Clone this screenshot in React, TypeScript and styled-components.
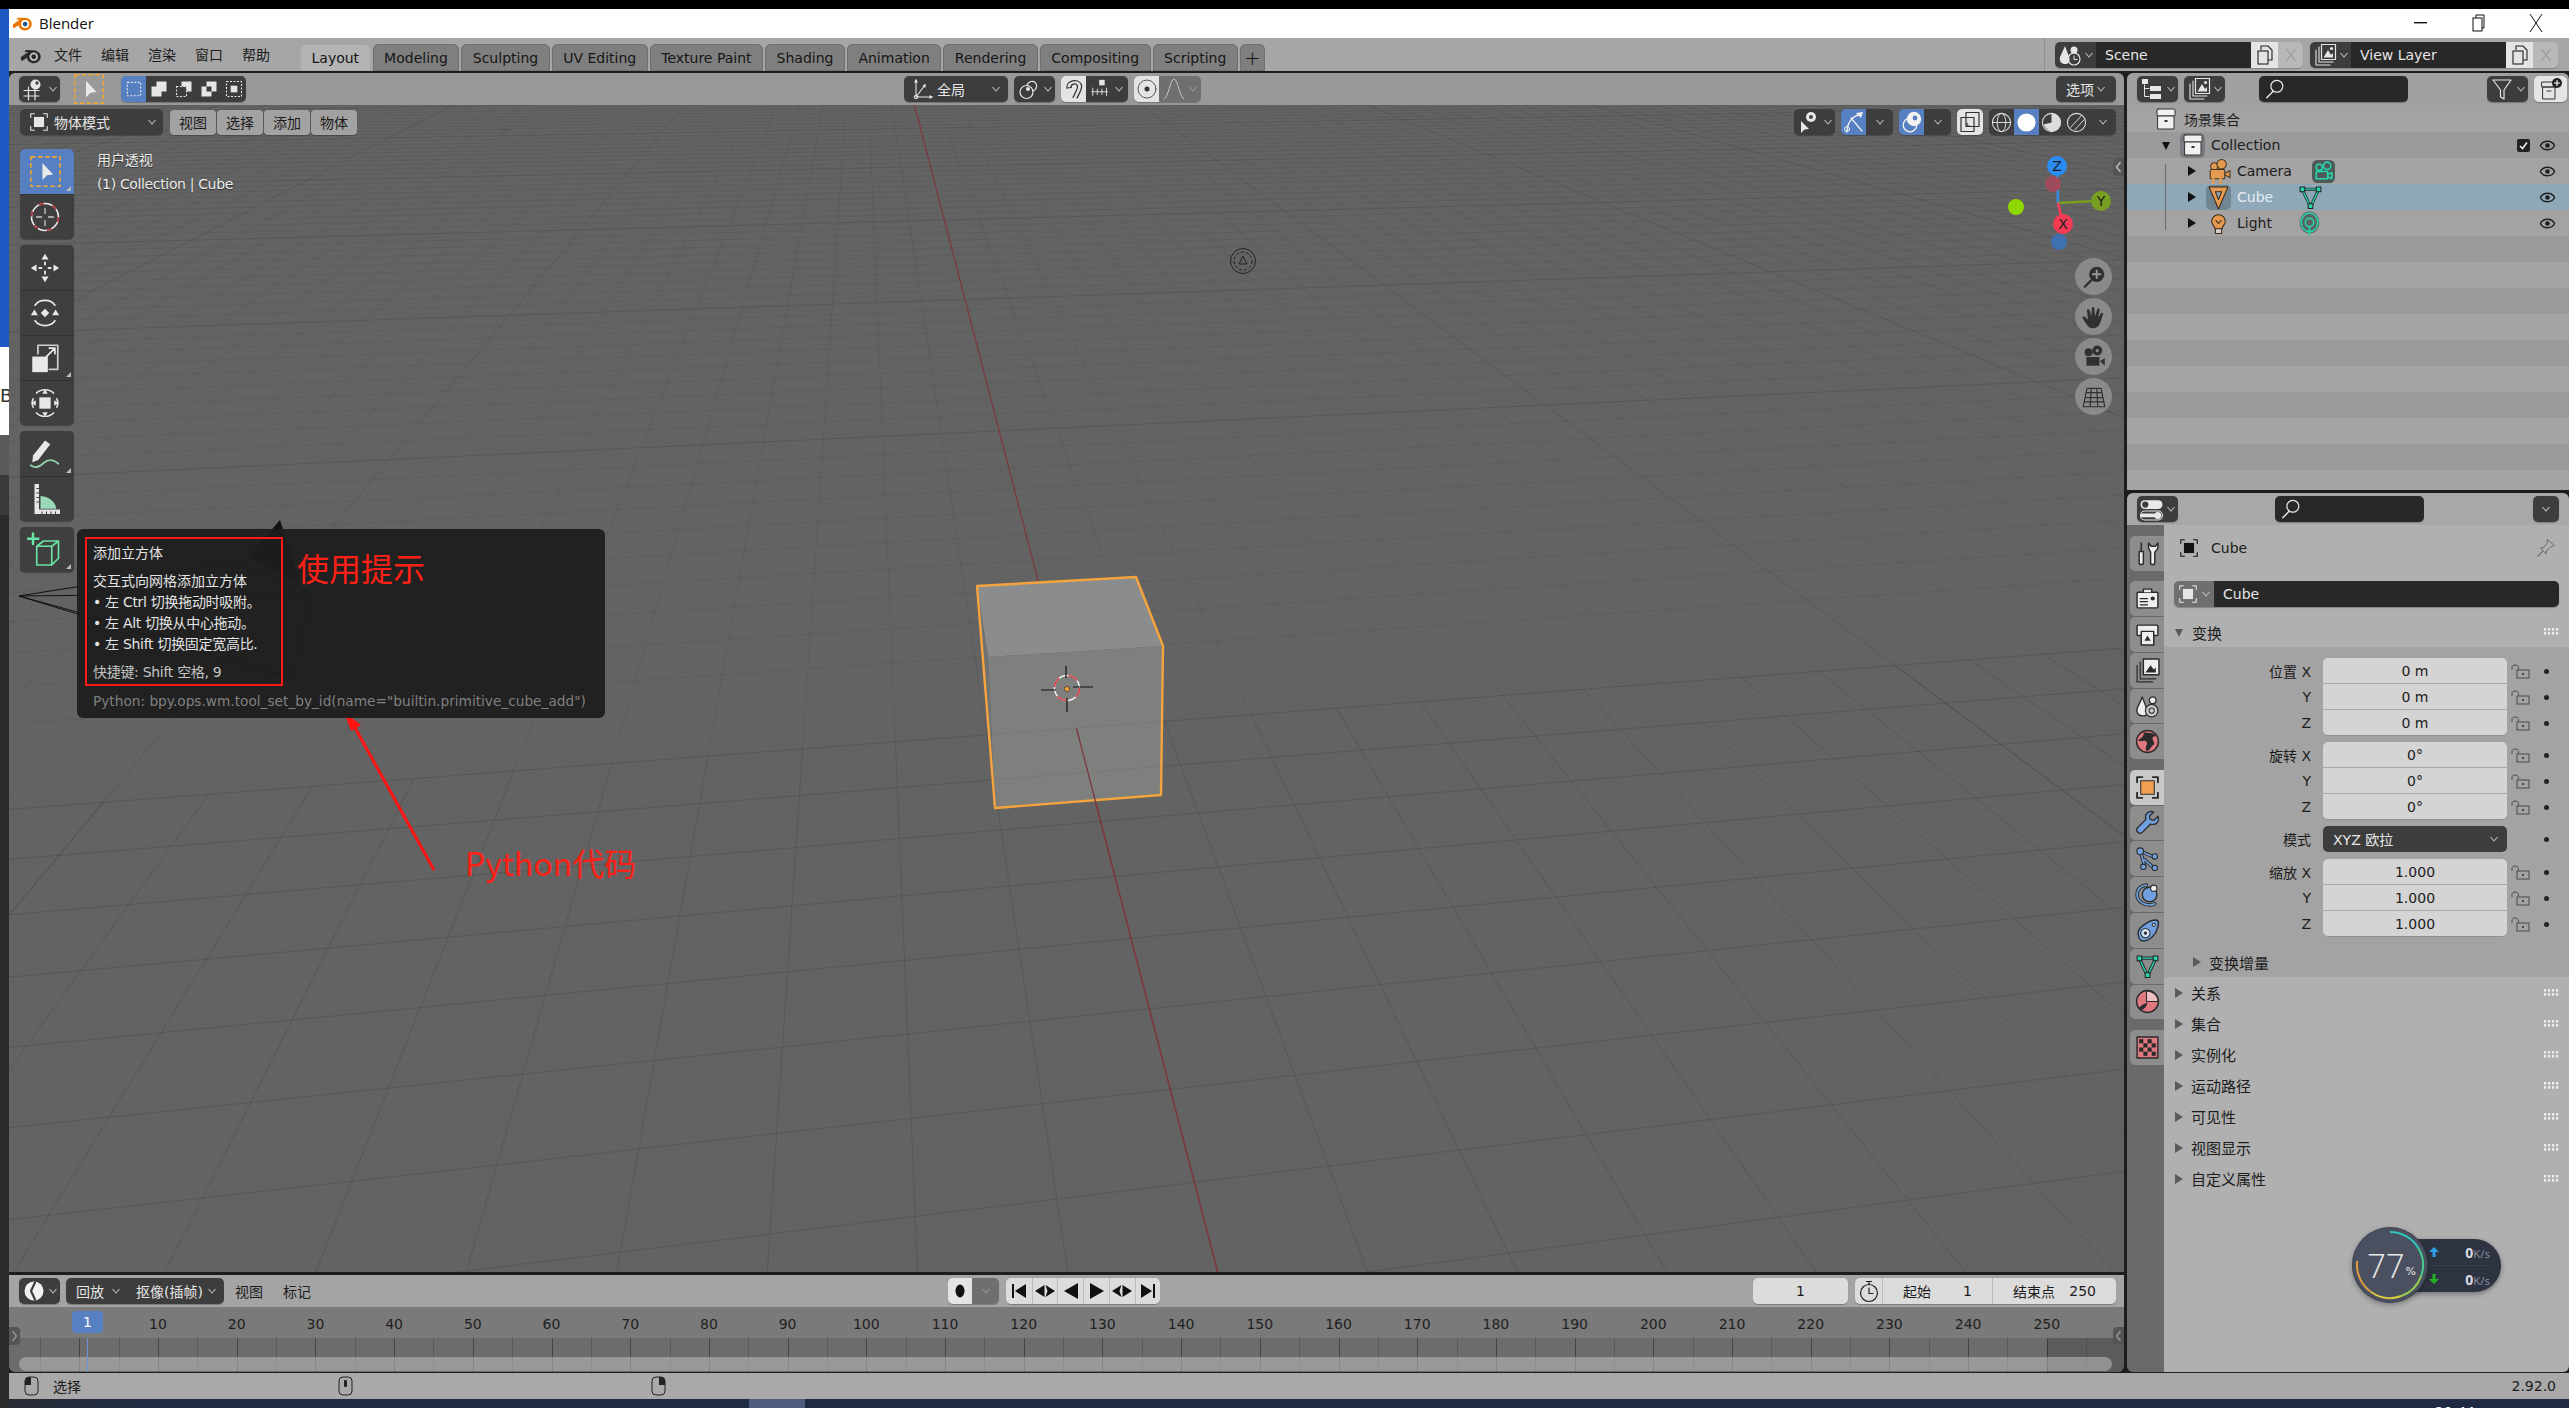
import React from "react";
import styled, { createGlobalStyle } from "styled-components";

const FONT = `"DejaVu Sans", "Noto Sans CJK SC", sans-serif`;
const BLUE = "#5680c2";
const DARK = "#3d3d3d";
const FIELD = "#282828";

const GlobalStyle = createGlobalStyle`
  html, body {
    margin: 0;
    padding: 0;
    width: 2569px;
    height: 1408px;
    overflow: hidden;
    background: #000;
  }
  body {
    font-family: ${FONT};
    font-size: 14px;
    color: #1a1a1a;
  }
  * {
    box-sizing: border-box;
  }
`;

const Page = styled.div`
  width: 2569px;
  height: 1408px;
  display: flex;
  flex-direction: column;
`;

const TopEdge = styled.div`
  height: 9px;
  background: #000;
`;

const Desk = styled.div`
  flex: 1;
  display: flex;
  min-height: 0;
`;

const LeftStrip = styled.div`
  width: 9px;
  display: flex;
  flex-direction: column;
  overflow: hidden;
  background: #2b2b2b;
`;

const StripPiece = styled.div<{ $h: number; $bg: string }>`
  height: ${(p) => p.$h}px;
  background: ${(p) => p.$bg};
  font-size: 18px;
  color: #333;
  line-height: 1;
  white-space: nowrap;
  padding-top: 40px;
`;

const Window = styled.div`
  flex: 1;
  min-width: 0;
  display: flex;
  flex-direction: column;
`;

const TitleBar = styled.div`
  height: 29px;
  background: #fff;
  display: flex;
  align-items: center;
  padding: 0 0 2px 3px;
  gap: 6px;
  font-family: "Open Sans", sans-serif;
  font-size: 15px;
  color: #111;
`;

const WinButtons = styled.div`
  margin-left: auto;
  display: flex;
  padding-right: 4px;
`;

const WinButton = styled.div`
  width: 58px;
  height: 20px;
  display: flex;
  align-items: center;
  justify-content: center;
`;

const TopBar = styled.div`
  height: 33px;
  background: #a6a6a6;
  display: flex;
  align-items: flex-end;
`;

const TopLogo = styled.div`
  width: 45px;
  height: 33px;
  padding-left: 11px;
  display: flex;
  align-items: center;
`;

const MenuRow = styled.div`
  height: 33px;
  display: flex;
  align-items: center;
  gap: 19px;
  padding-bottom: 1px;
  color: #1c1c1c;
`;

const Tabs = styled.div`
  display: flex;
  gap: 2px;
  margin-left: 30px;
`;

const Tab = styled.div<{ $active?: boolean }>`
  height: 27px;
  padding: 0 11.5px;
  display: flex;
  align-items: center;
  justify-content: center;
  border-radius: 6px 6px 0 0;
  background: ${(p) => (p.$active ? "#b4b4b4" : "#7f7f7f")};
  box-shadow: inset 0 0 0 1px ${(p) => (p.$active ? "#a8a8a8" : "#707070")};
  color: #161616;
`;

const PlusTab = styled(Tab)`
  width: 25px;
  padding: 0;
  font-size: 20px;
  font-weight: 300;
`;

const SceneArea = styled.div`
  margin-left: auto;
  height: 33px;
  display: flex;
  align-items: center;
  gap: 7px;
  padding-right: 11px;
  border-left: 1px solid #8f8f8f;
  padding-left: 10px;
`;

const SceneGroup = styled.div`
  height: 26px;
  display: flex;
  border-radius: 5px;
  overflow: hidden;
  box-shadow: 0 1px 1px rgba(0, 0, 0, 0.2);
`;

const Seg = styled.div<{ $w: number; $tone?: "dark" | "blue" | "white" | "mid" | "field" | "pale" }>`
  width: ${(p) => p.$w}px;
  height: 100%;
  flex: none;
  display: flex;
  align-items: center;
  justify-content: center;
  gap: 2px;
  color: #e6e6e6;
  background: ${(p) =>
    ({ dark: DARK, blue: BLUE, white: "#e4e4e4", mid: "#6f6f6f", field: FIELD, pale: "#b8b8b8" })[p.$tone || "dark"]};
`;

const NameSeg = styled(Seg)`
  justify-content: flex-start;
  padding-left: 9px;
`;

const Workspace = styled.div`
  flex: 1;
  min-height: 0;
  background: #1d1d1d;
  display: flex;
  gap: 3px;
  padding: 2px 0 1px;
`;

const LeftColumn = styled.div`
  width: 2115px;
  display: flex;
  flex-direction: column;
  gap: 3px;
`;

const RightColumn = styled.div`
  flex: 1;
  min-width: 0;
  display: flex;
  flex-direction: column;
  gap: 3px;
`;

const ViewportArea = styled.div`
  flex: 1;
  min-height: 0;
  display: flex;
  flex-direction: column;
  border-radius: 6px 6px 0 0;
  overflow: hidden;
`;

const HeaderBar = styled.div`
  height: 32px;
  flex: none;
  background: #999;
  display: flex;
  align-items: center;
  padding: 0 8px 0 10px;
`;

const WidgetRow = styled.div<{ $ml?: number; $gap?: number }>`
  display: flex;
  align-items: center;
  gap: ${(p) => p.$gap ?? 6}px;
  margin-left: ${(p) => (p.$ml === undefined ? "0" : `${p.$ml}px`)};
`;

const RightRow = styled(WidgetRow)`
  margin-left: auto;
`;

const Group = styled.div`
  height: 26px;
  display: flex;
  border-radius: 5px;
  overflow: hidden;
  flex: none;
  box-shadow: 0 1px 1px rgba(0, 0, 0, 0.25);
`;

const ToolIcon = styled.div`
  width: 28px;
  height: 28px;
  margin-left: 15px;
  margin-right: 18px;
  display: flex;
  align-items: center;
  justify-content: center;
`;

const Canvas = styled.div`
  flex: 1;
  position: relative;
  background: #636363;
  overflow: hidden;
`;

const SceneSvg = styled.svg`
  position: absolute;
  left: 0;
  top: 0;
`;

const ViewHeader = styled.div`
  position: absolute;
  left: 11px;
  right: 8px;
  top: 4px;
  height: 26px;
  display: flex;
  align-items: center;
`;

const ModeLabel = styled.span`
  flex: 1;
`;

const ModeSeg = styled(Seg)`
  justify-content: flex-start;
  padding: 0 6px 0 8px;
  gap: 4px;
`;

const MenuButtons = styled.div`
  display: flex;
  gap: 1px;
  margin-left: 7px;
`;

const MenuButton = styled.div`
  width: 46px;
  height: 25px;
  background: #a2a2a2;
  border-radius: 4px;
  color: #1c1c1c;
  display: flex;
  align-items: center;
  justify-content: center;
  box-shadow: 0 1px 1px rgba(0, 0, 0, 0.25);
`;

const ViewInfo = styled.div`
  position: absolute;
  left: 88px;
  top: 43px;
  color: #ececec;
  line-height: 24px;
  letter-spacing: -0.1px;
  text-shadow: 0 1px 1px rgba(0, 0, 0, 0.55);
`;

const ViewInfoLatin = styled.div`
  letter-spacing: -0.35px;
`;

const Toolbar = styled.div`
  position: absolute;
  left: 11px;
  top: 44px;
  width: 54px;
  display: flex;
  flex-direction: column;
  gap: 6px;
`;

const ToolGroup = styled.div`
  border-radius: 5px;
  overflow: hidden;
  display: flex;
  flex-direction: column;
  box-shadow: 0 1px 1px rgba(0, 0, 0, 0.3), inset 0 0 0 1px #333;
`;

const ToolButton = styled.div<{ $active?: boolean; $corner?: boolean }>`
  height: 45px;
  position: relative;
  display: flex;
  align-items: center;
  justify-content: center;
  padding-right: 4px;
  background: ${(p) => (p.$active ? BLUE : "#3f3f3f")};
  & + & {
    border-top: 1px solid #333;
  }
  &::after {
    content: "";
    display: ${(p) => (p.$corner ? "block" : "none")};
    position: absolute;
    right: 3px;
    bottom: 3px;
    border-style: solid;
    border-width: 0 0 5px 5px;
    border-color: transparent transparent #bbb transparent;
  }
`;

const Tooltip = styled.div`
  position: absolute;
  left: 68px;
  top: 424px;
  width: 528px;
  height: 189px;
  border-radius: 6px;
  background: rgba(30, 30, 30, 0.95);
  padding: 14px 0 0 16px;
  color: #e4e4e4;
  line-height: 21px;
`;

const TipLine = styled.div<{ $mt?: number; $tone?: string; $tight?: boolean }>`
  margin-top: ${(p) => p.$mt ?? 0}px;
  color: ${(p) => p.$tone || "#e4e4e4"};
  letter-spacing: ${(p) => (p.$tight ? "-0.3px" : "0")};
  white-space: nowrap;
`;

const PythonLine = styled(TipLine)`
  font-size: 13.7px;
`;

const RedBox = styled.div`
  position: absolute;
  left: 8px;
  top: 8px;
  width: 198px;
  height: 149px;
  border: 2px solid #ff1a1a;
`;

const RedNote = styled.div<{ $x: number; $y: number }>`
  position: absolute;
  left: ${(p) => p.$x}px;
  top: ${(p) => p.$y}px;
  font-family: "Noto Sans CJK SC", sans-serif;
  font-size: 32px;
  line-height: 40px;
  color: #ff2015;
  white-space: nowrap;
`;

const SideChevron = styled.div<{ $side: "left" | "right"; $y: number }>`
  position: absolute;
  ${(p) => p.$side}: 0;
  top: ${(p) => p.$y}px;
  width: 11px;
  height: 18px;
  background: #555;
  border-radius: ${(p) => (p.$side === "right" ? "4px 0 0 4px" : "0 4px 4px 0")};
  color: #aaa;
  display: flex;
  align-items: center;
  justify-content: center;
`;

const NavColumn = styled.div`
  position: absolute;
  left: 2066px;
  top: 153px;
  display: flex;
  flex-direction: column;
  gap: 3px;
`;

const NavButton = styled.div`
  width: 37px;
  height: 37px;
  border-radius: 50%;
  background: #8a8a8a;
  display: flex;
  align-items: center;
  justify-content: center;
`;

const Timeline = styled.div`
  height: 97px;
  flex: none;
  display: flex;
  flex-direction: column;
  position: relative;
  overflow: hidden;
  border-radius: 0 0 6px 6px;
`;

const TimeHeader = styled(HeaderBar)`
  background: #a4a4a4;
`;

const PlainMenu = styled.div`
  display: flex;
  gap: 20px;
  margin-left: 11px;
  color: #1c1c1c;
`;

const LightSeg = styled(Seg)`
  background: #dcdcdc;
  color: #1c1c1c;
  & + & {
    border-left: 1px solid #bdbdbd;
  }
`;

const RangeSeg = styled(LightSeg)`
  justify-content: space-between;
  padding: 0 20px;
`;

const DropSeg = styled(Seg)<{ $pad: number }>`
  justify-content: space-between;
  padding: 0 7px 0 ${(p) => p.$pad}px;
`;

const Ruler = styled.div`
  height: 31px;
  flex: none;
  background: #7a7a7a;
  position: relative;
`;

const RulerNum = styled.span`
  position: absolute;
  top: 7px;
  transform: translateX(-50%);
  color: #1f1f1f;
  line-height: 21px;
`;

const CurrentFrame = styled.div`
  position: absolute;
  left: 63px;
  top: 4px;
  width: 31px;
  height: 22px;
  border-radius: 4px;
  background: ${BLUE};
  color: #fff;
  display: flex;
  align-items: center;
  justify-content: center;
`;

const Tracks = styled.div`
  flex: 1;
  background: #6c6c6c;
  position: relative;
  overflow: hidden;
`;

const GridLine = styled.div<{ $major?: boolean }>`
  position: absolute;
  top: 0;
  bottom: 0;
  width: 1px;
  background: ${(p) => (p.$major ? "#454545" : "#5a5a5a")};
`;

const OutOfRange = styled.div`
  position: absolute;
  top: 0;
  bottom: 0;
  right: 0;
  width: 77px;
  background: rgba(0, 0, 0, 0.14);
`;

const PlayHead = styled.div`
  position: absolute;
  left: 78px;
  top: 0;
  bottom: 0;
  width: 1px;
  background: #6f95d4;
  z-index: 2;
`;

const ScrollBar = styled.div`
  position: absolute;
  left: 10px;
  right: 12px;
  bottom: 1px;
  height: 14px;
  border-radius: 7px;
  background: rgba(190, 190, 190, 0.55);
  z-index: 1;
`;

const StatusBar = styled.div`
  height: 26px;
  flex: none;
  background: #a9a9a9;
  display: flex;
  align-items: center;
  color: #1c1c1c;
`;

const Hint = styled.div<{ $w: number }>`
  width: ${(p) => p.$w}px;
  display: flex;
  align-items: center;
  gap: 14px;
  padding-left: 15px;
`;

const Version = styled.div`
  margin-left: auto;
  padding-right: 13px;
`;

const Taskbar = styled.div`
  height: 9px;
  flex: none;
  display: flex;
  overflow: hidden;
  background: linear-gradient(90deg, #262a33, #1f2a44 6%);
`;

const TaskItem = styled.div`
  width: 56px;
  margin-left: 740px;
  background: #4f5b7a;
`;

const Clock = styled.div`
  margin-left: auto;
  margin-right: 94px;
  padding-top: 6px;
  color: #fff;
  font-size: 14px;
  line-height: 14px;
`;

const Outliner = styled.div`
  height: 417px;
  flex: none;
  display: flex;
  flex-direction: column;
  border-radius: 6px 6px 0 0;
  overflow: hidden;
`;

const SmallHeader = styled(HeaderBar)`
  padding: 0 2px 0 10px;
  background: #a0a0a0;
`;

const SearchBox = styled.div<{ $ml: number }>`
  width: 149px;
  height: 26px;
  margin-left: ${(p) => p.$ml}px;
  background: ${FIELD};
  border-radius: 5px;
  display: flex;
  align-items: center;
  padding-left: 5px;
  box-shadow: 0 1px 1px rgba(0, 0, 0, 0.25);
`;

const OutlinerList = styled.div`
  flex: 1;
  position: relative;
  overflow: hidden;
  padding-top: 1px;
  background: #a3a3a3;
  &::before {
    content: "";
    position: absolute;
    left: 38px;
    top: 59px;
    width: 1px;
    height: 66px;
    background: #6b6b6b;
    z-index: 1;
  }
`;

const OutRow = styled.div<{ $tone: number; $selected?: boolean; $pad: number }>`
  height: 26px;
  display: flex;
  align-items: center;
  padding-left: ${(p) => p.$pad}px;
  color: ${(p) => (p.$selected ? "#e4edf4" : "#1c1c1c")};
  background: ${(p) => (p.$selected ? "#8fa8b8" : p.$tone % 2 ? "#a3a3a3" : "#9a9a9a")};
`;

const Disclosure = styled.span<{ $w: number }>`
  width: ${(p) => p.$w}px;
  flex: none;
  display: flex;
  align-items: center;
`;

const RowIcon = styled.span<{ $on?: boolean; $w: number }>`
  width: ${(p) => p.$w}px;
  height: 25px;
  flex: none;
  display: flex;
  align-items: center;
  justify-content: center;
  border-radius: 5px;
  background: ${(p) => (p.$on ? "rgba(70,80,90,0.4)" : "transparent")};
`;

const RowLabel = styled.span<{ $w: number }>`
  width: ${(p) => p.$w}px;
  flex: none;
  padding-left: 6px;
`;

const RowEnd = styled.span`
  margin-left: auto;
  display: flex;
  align-items: center;
  gap: 9px;
  padding-right: 13px;
`;

const CheckBox = styled.span`
  width: 13px;
  height: 13px;
  border-radius: 2px;
  background: #222;
  display: flex;
  align-items: center;
  justify-content: center;
`;

const Properties = styled.div`
  flex: 1;
  min-height: 0;
  display: flex;
  flex-direction: column;
  border-radius: 6px 6px 6px 6px;
  overflow: hidden;
  position: relative;
`;

const PropHeader = styled(HeaderBar)`
  background: #a8a8a8;
  padding: 0 10px;
`;

const PropBody = styled.div`
  flex: 1;
  min-height: 0;
  display: flex;
`;

const TabColumn = styled.div`
  width: 37px;
  flex: none;
  background: #6a6a6a;
  padding: 11px 0 0 3px;
  display: flex;
  flex-direction: column;
`;

const PropTab = styled.div<{ $active?: boolean; $gap?: boolean }>`
  height: 34.8px;
  flex: none;
  margin-bottom: ${(p) => (p.$gap ? 10.5 : 1)}px;
  border-radius: 5px 0 0 5px;
  background: ${(p) => (p.$active ? "#c8c8c8" : "#8d8d8d")};
  display: flex;
  align-items: center;
  justify-content: center;
`;

const PropContent = styled.div`
  flex: 1;
  min-width: 0;
  background: #b0b0b0;
  display: flex;
  flex-direction: column;
`;

const TitleRow = styled.div`
  height: 46px;
  flex: none;
  display: flex;
  align-items: center;
  padding: 0 13px 0 14px;
  gap: 11px;
  color: #1c1c1c;
`;

const PinSlot = styled.span`
  margin-left: auto;
  display: flex;
`;

const NameField = styled.div`
  height: 26px;
  margin: 10px;
  display: flex;
  border-radius: 5px;
  overflow: hidden;
  flex: none;
  box-shadow: 0 1px 1px rgba(0, 0, 0, 0.25);
`;

const PanelHead = styled.div<{ $pad?: number; $h?: number }>`
  height: ${(p) => p.$h ?? 30}px;
  flex: none;
  display: flex;
  align-items: center;
  padding: 0 10px 0 ${(p) => p.$pad ?? 11}px;
  font-size: 15px;
  color: #1c1c1c;
  gap: 8px;
`;

const PanelDots = styled.span`
  margin-left: auto;
  display: flex;
`;

const PanelBody = styled.div`
  background: #a3a3a3;
  padding-top: 11px;
  flex: none;
`;

const FieldBlock = styled.div<{ $mb: number }>`
  margin-bottom: ${(p) => p.$mb}px;
`;

const FieldRow = styled.div`
  height: 26px;
  display: grid;
  grid-template-columns: 159px 184px 24px 1fr;
  align-items: center;
`;

const FieldLabel = styled.div`
  text-align: right;
  margin-right: 12px;
  color: #1c1c1c;
  white-space: nowrap;
`;

const NumField = styled.div<{ $first: boolean; $last: boolean }>`
  height: 26px;
  background: #d4d4d4;
  color: #1c1c1c;
  display: flex;
  align-items: center;
  justify-content: center;
  border-bottom: 1px solid ${(p) => (p.$last ? "#8f8f8f" : "#a9a9a9")};
  border-radius: ${(p) => (p.$first ? "5px 5px" : "0 0")} ${(p) => (p.$last ? "5px 5px" : "0 0")};
`;

const SelectField = styled.div`
  height: 26px;
  background: ${DARK};
  color: #e6e6e6;
  border-radius: 5px;
  display: flex;
  align-items: center;
  padding: 0 8px 0 10px;
  justify-content: space-between;
`;

const FieldDot = styled.div`
  width: 5px;
  height: 5px;
  border-radius: 50%;
  background: #222;
  justify-self: start;
  margin-left: 13px;
`;

const LockSlot = styled.div`
  display: flex;
  padding-left: 3px;
`;

const StatWidget = styled.div`
  position: absolute;
  left: 226px;
  top: 735px;
  width: 148px;
  height: 74px;
`;

const StatPill = styled.div`
  position: absolute;
  left: 40px;
  top: 11px;
  width: 108px;
  height: 53px;
  border-radius: 0 27px 27px 0;
  background: #2d3340;
  box-shadow: 0 2px 5px rgba(0, 0, 0, 0.35);
  display: flex;
  flex-direction: column;
  padding-left: 36px;
  padding-right: 11px;
`;

const StatLine = styled.div`
  flex: 1;
  display: flex;
  align-items: center;
  justify-content: space-between;
  & + & {
    border-top: 1px solid #3a404d;
  }
`;

const StatValue = styled.span`
  font-family: "Open Sans", sans-serif;
  font-weight: 700;
  font-size: 14px;
  color: #d8dbe2;
`;

const StatUnit = styled.span`
  font-weight: 400;
  font-size: 11.5px;
  color: #8c93a1;
`;

const StatDial = styled.div`
  position: absolute;
  left: 0;
  top: 0;
  width: 74px;
  height: 74px;
  border-radius: 50%;
  background: #4a5060;
  box-shadow: 0 0 0 1px #3c414e, 0 2px 6px rgba(0, 0, 0, 0.4);
  display: flex;
  align-items: center;
  justify-content: center;
`;

const StatRing = styled.svg`
  position: absolute;
  left: 0;
  top: 0;
`;

const StatNumber = styled.span`
  font-family: "Open Sans", sans-serif;
  font-weight: 300;
  font-size: 33px;
  line-height: 1;
  color: #e9e9e9;
  margin-left: 3px;
`;

const StatPercent = styled.span`
  font-size: 11px;
  color: #e9e9e9;
  margin-top: 12px;
  margin-left: 1px;
`;

type IconProps = { size?: number; vb?: number; children?: React.ReactNode };

const Svg = ({ size = 22, vb = 24, children }: IconProps) => (
  <svg width={size} height={size} viewBox={`0 0 ${vb} ${vb}`} fill="none" strokeLinecap="round" strokeLinejoin="round" style={{ flex: "none" }}>
    {children}
  </svg>
);

const Chevron = ({ c = "#bdbdbd" }: { c?: string }) => (
  <svg width="10" height="8" viewBox="0 0 10 8" fill="none">
    <path d="M1.5 2 L5 6 L8.5 2" stroke={c} strokeWidth="1.1" />
  </svg>
);

const BlenderLogo = ({ size = 20, body = "#ea7600", eye = "#265787", ring = "#fff" }) => (
  <Svg size={size}>
    <path
      d="M1 14.2 L9 8.6 L4.7 8.6 L6.6 6.6 L14.5 6.7 C19 6.8 22.6 9.8 22.6 13.7 C22.6 17.8 19.2 21 15 21 C11 21 7.9 18.4 7.6 15 L3 18 C2 18.6 .8 18 1 16.6Z"
      fill={body}
    />
    <circle cx="15" cy="13.8" r="4.6" fill={ring} />
    <circle cx="15" cy="13.8" r="2.7" fill={eye} />
  </Svg>
);

const SelectBoxIcon = ({ size = 36 }) => (
  <Svg size={size}>
    <rect x="2.5" y="2.5" width="19" height="19" stroke="#f0a72e" strokeWidth="1" strokeDasharray="3 1.6" strokeLinecap="butt" />
    <path d="M10 6.5 L10 17.5 L13 14.5 L17 14 Z" fill="#e8e8e8" />
  </Svg>
);

const View3DIcon = () => (
  <Svg size={24}>
    <path d="M2 13.5H17M2 19H17M6.5 10V23M13 11V23" stroke="#e6e6e6" strokeWidth="1.2" />
    <circle cx="13.5" cy="7.5" r="5" fill="#e6e6e6" />
    <circle cx="15" cy="6" r="1.7" fill="#444" />
  </Svg>
);

const ModeIcon = ({ kind }: { kind: number }) => {
  const dash = { stroke: "#e6e6e6", strokeWidth: 1.3, strokeDasharray: "2.4 1.8", strokeLinecap: "butt" as const };
  return (
    <Svg size={20}>
      {kind === 0 && <rect x="4" y="4" width="16" height="16" {...dash} />}
      {kind === 1 && <path d="M9 3H21V15H15V21H3V9H9Z" fill="#e6e6e6" />}
      {kind === 2 && (
        <>
          <rect x="3" y="9" width="12" height="12" {...dash} />
          <path d="M9 3H21V15H15V9H9Z" fill="#e6e6e6" />
        </>
      )}
      {kind === 3 && <path fillRule="evenodd" d="M9 3H21V15H15V21H3V9H9ZM9 9V15H15V9Z" fill="#e6e6e6" />}
      {kind === 4 && (
        <>
          <rect x="3" y="3" width="18" height="18" {...dash} />
          <rect x="8" y="8" width="8" height="8" fill="#e6e6e6" />
        </>
      )}
    </Svg>
  );
};

const ObjectModeIcon = ({ c = "#e6e6e6" }: { c?: string }) => (
  <Svg size={22}>
    <path d="M3 7V3H7M17 3H21V7M3 17V21H7M17 21H21V17" stroke={c} strokeWidth="1.2" />
    <rect x="6.5" y="6.5" width="11" height="11" fill={c} />
  </Svg>
);

const CursorTool = () => (
  <Svg size={34}>
    <circle cx="12" cy="12" r="9.5" stroke="#f0f0f0" strokeWidth="1.1" />
    <circle cx="12" cy="12" r="9.5" stroke="#b52d36" strokeWidth="1.1" strokeDasharray="3.5 6.5" strokeLinecap="butt" />
    <path d="M12 6V9.5M12 14.5V18M6 12H9.5M14.5 12H18" stroke="#ccc" strokeWidth="0.9" />
  </Svg>
);

const MoveTool = () => (
  <Svg size={34}>
    <path d="M12 2L9.5 6H14.5ZM12 22L9.5 18H14.5ZM2 12L6 9.5V14.5ZM22 12L18 9.5V14.5Z" fill="#e8e8e8" />
    <path d="M12 8V9.5M12 14.5V16M8 12H9.5M14.5 12H16" stroke="#e8e8e8" strokeWidth="1.3" />
  </Svg>
);

const RotateTool = () => (
  <Svg size={34}>
    <path d="M5 6.5C8 2 16 2 19 6.5M5 17.5C8 22 16 22 19 17.5" stroke="#e8e8e8" strokeWidth="1.2" />
    <path d="M12 9L15 12L12 15L9 12Z" fill="#e8e8e8" />
    <path d="M4.5 9.5L2 13.5H7ZM19.5 9.5L17 13.5H22Z" fill="#e8e8e8" />
  </Svg>
);

const ScaleTool = () => (
  <Svg size={34}>
    <path d="M7 9V3H21V20H15" stroke="#d0d0d0" strokeWidth="1.2" />
    <rect x="3" y="11" width="11" height="11" fill="#e8e8e8" />
    <path d="M13 11L19 5M15 5H19V9" stroke="#e8e8e8" strokeWidth="1.2" />
  </Svg>
);

const TransformTool = () => (
  <Svg size={34}>
    <path d="M6 5C9 1.8 15 1.8 18 5M6 19C9 22.2 15 22.2 18 19M3.6 9C2.7 11 2.7 13 3.6 15M20.4 9C21.3 11 21.3 13 20.4 15" stroke="#e8e8e8" strokeWidth="1.1" />
    <rect x="8" y="8" width="8" height="8" fill="#e8e8e8" />
    <path d="M12 2.5L10 5.5H14ZM12 21.5L10 18.5H14ZM2.5 12L5.5 10V14ZM21.5 12L18.5 10V14Z" fill="#e8e8e8" />
  </Svg>
);

const AnnotateTool = () => (
  <Svg size={36}>
    <path d="M12 3L15.5 5.5L7.5 16L3.5 17.5L4 13Z" fill="#e8e8e8" />
    <path d="M2.5 19.5C5 21.5 8 21 11 18C14 15.5 17 15 21 18.5" stroke="#8ecfa8" strokeWidth="1.2" />
  </Svg>
);

const MeasureTool = () => (
  <Svg size={36}>
    <path d="M5 2H8V19H22V22H5Z" fill="#e6e6e6" />
    <path d="M9 10C15 10.5 19 14 19.5 18.5H9Z" fill="#9adab8" />
    <path d="M8 5H6.5M8 8H6.5M8 11H6.5M8 14H6.5M10 20.5V22M13 20.5V22M16 20.5V22M19 20.5V22" stroke="#444" strokeWidth="0.7" />
  </Svg>
);

const AddCubeTool = () => (
  <Svg size={36}>
    <path d="M4 1V8M0.5 4.5H7.5" stroke="#6be3a5" strokeWidth="1.7" />
    <path d="M6.5 9.5H16.5V22H6.5ZM6.5 9.5L11 6H21V17.5L16.5 22M16.5 9.5L21 6" stroke="#6be3a5" strokeWidth="1.1" />
  </Svg>
);

const OrientIcon = () => (
  <Svg size={24}>
    <path d="M5 20V3M5 20H21M5 20L14 8" stroke="#e6e6e6" strokeWidth="1.1" />
    <path d="M5 2L3 5.5H7ZM22 20L18.5 18V22ZM15 7L11.5 8.5L14.2 11Z" fill="#e6e6e6" />
    <circle cx="5" cy="20" r="1.8" stroke="#e6e6e6" />
  </Svg>
);

const PivotIcon = () => (
  <Svg size={24}>
    <circle cx="9.5" cy="15" r="6.5" stroke="#e6e6e6" strokeWidth="1.2" />
    <path d="M10 8.5C11 4 17 3 19 6.5C21 10 18 14 15.5 14" stroke="#e6e6e6" strokeWidth="1.2" />
    <circle cx="11" cy="12" r="2" fill="#e6e6e6" />
  </Svg>
);

const MagnetIcon = () => (
  <Svg size={24}>
    <path d="M5 11C3.5 3.5 17 .5 19.5 8C20.5 11.5 18 15 15 21" stroke="#333" strokeWidth="1.3" />
    <path d="M9 10.5C8.5 7 14.5 5.5 15.5 9C16 11 14.5 13 11 20.5" stroke="#333" strokeWidth="1.3" />
    <path d="M5 11L9 10.5" stroke="#333" />
  </Svg>
);

const SnapGridIcon = () => (
  <Svg size={22}>
    <path d="M2 15H19M3 11V19M8 12V18M13 12V18M18 11V19" stroke="#e6e6e6" strokeWidth="1" />
    <rect x="10" y="2" width="6" height="6" fill="#e6e6e6" />
  </Svg>
);

const PropCircleIcon = () => (
  <Svg size={24}>
    <circle cx="12" cy="12" r="9" stroke="#555" strokeWidth="1" />
    <circle cx="12" cy="12" r="2.5" fill="#333" />
  </Svg>
);

const FalloffIcon = () => (
  <Svg size={24}>
    <path d="M2 22C7 20 8 2 12 2C16 2 17 20 22 22" stroke="#c4c4c4" strokeWidth="1" />
  </Svg>
);

const OptionSelIcon = () => (
  <Svg size={24}>
    <circle cx="14" cy="7" r="5" fill="#e6e6e6" />
    <circle cx="14" cy="7" r="2" fill="#444" />
    <path d="M4 11V23L7.5 19.5L12 19Z" fill="#e6e6e6" />
  </Svg>
);

const GizmoIcon = () => (
  <Svg size={24}>
    <path d="M5 22C5 13 10 6 19 4" stroke="#f2f2f2" strokeWidth="1.3" />
    <path d="M21 2L14 3L19 8Z" fill="#f2f2f2" />
    <path d="M9 8L20 21" stroke="#f2f2f2" strokeWidth="1.2" />
    <circle cx="5" cy="19" r="2.5" stroke="#f2f2f2" />
  </Svg>
);

const OverlayIcon = () => (
  <Svg size={24}>
    <circle cx="10" cy="15" r="6.8" stroke="#f2f2f2" strokeWidth="1.3" />
    <circle cx="14" cy="9" r="7.2" fill="#f2f2f2" />
    <circle cx="15" cy="8" r="2.4" fill={BLUE} />
  </Svg>
);

const XrayIcon = () => (
  <Svg size={24}>
    <rect x="8" y="2.5" width="13" height="14" stroke="#333" strokeWidth="1.2" />
    <rect x="3" y="7.5" width="13" height="14" stroke="#333" strokeWidth="1.2" />
    <path d="M9 13V16H12" stroke="#333" strokeWidth="1.2" />
  </Svg>
);

const ShadeIcon = ({ kind }: { kind: number }) => (
  <Svg size={23}>
    {kind === 0 && (
      <>
        <circle cx="12" cy="12" r="9.5" stroke="#ddd" strokeWidth="1.1" />
        <ellipse cx="12" cy="12" rx="4.5" ry="9.5" stroke="#ddd" strokeWidth="1" />
        <path d="M2.5 12H21.5" stroke="#ddd" strokeWidth="1" />
      </>
    )}
    {kind === 1 && <circle cx="12" cy="12" r="9.5" fill="#fff" />}
    {kind === 2 && (
      <>
        <circle cx="12" cy="12" r="9.5" stroke="#ddd" strokeWidth="1.1" />
        <path d="M12 2.5A9.5 9.5 0 0 1 12 21.5C9 21 5 17 3.5 14L12 12Z" fill="#ddd" />
      </>
    )}
    {kind === 3 && (
      <>
        <circle cx="12" cy="12" r="9.5" stroke="#ddd" strokeWidth="1.1" />
        <path d="M6 17L17 5M10 20L20 9" stroke="#ddd" strokeWidth="1" />
      </>
    )}
  </Svg>
);

const MagnifyIcon = ({ c = "#e6e6e6" }: { c?: string }) => (
  <Svg size={22}>
    <circle cx="14" cy="9" r="6.5" stroke={c} strokeWidth="1.3" />
    <path d="M10 14.5L3 21.5" stroke={c} strokeWidth="1.6" />
  </Svg>
);

const TreeIcon = () => (
  <Svg size={24}>
    <rect x="2" y="2" width="6" height="5" fill="#e6e6e6" />
    <rect x="10" y="9" width="11" height="5" fill="#e6e6e6" />
    <rect x="10" y="17" width="11" height="5" fill="#e6e6e6" />
    <path d="M4.5 8V19.5H9M4.5 11.5H9" stroke="#e6e6e6" strokeWidth="1" />
  </Svg>
);

const LayerIcon = ({ c = "#e6e6e6", pic = "#e6e6e6" }: { c?: string; pic?: string }) => (
  <Svg size={24}>
    <path d="M3 7V22H17M6 4V19H20" stroke={c} strokeWidth="1.1" />
    <rect x="8.5" y="1.5" width="14" height="15" stroke={c} strokeWidth="1.2" />
    <path d="M10.5 14.5L15 7L18 12L20 10V14.5Z" fill={pic} />
    <circle cx="18.5" cy="5.5" r="1.6" fill={pic} />
  </Svg>
);

const FunnelIcon = () => (
  <Svg size={24}>
    <path d="M3 3H21L14 13V22L10.5 20V13Z" stroke="#e6e6e6" strokeWidth="1.2" />
  </Svg>
);

const NewCollectionIcon = () => (
  <Svg size={24}>
    <rect x="3" y="5" width="14" height="5" stroke="#333" strokeWidth="1" />
    <rect x="4" y="10" width="12" height="12" stroke="#333" strokeWidth="1" />
    <path d="M8 14H12" stroke="#333" />
    <circle cx="18" cy="6" r="5" fill="#222" />
    <path d="M18 3.5V8.5M15.5 6H20.5" stroke="#fff" strokeWidth="1.2" />
  </Svg>
);

const SceneIcon = ({ c = "#e6e6e6" }: { c?: string }) => (
  <Svg size={24}>
    <path d="M7 3L2 14C1 19 4 21 7 21C10 21 12 19 11.5 15Z" fill={c} />
    <circle cx="16" cy="7" r="3.5" fill={c} />
    <circle cx="16" cy="16" r="6" stroke={c} strokeWidth="1.2" />
    <path d="M16 13V16.5H19" stroke={c} />
  </Svg>
);

const CollectionBox = () => (
  <Svg size={24}>
    <rect x="3" y="2" width="18" height="7" rx="1" fill="#f1f1f1" stroke="#333" strokeWidth="1" />
    <rect x="4" y="9" width="16" height="13" fill="#f1f1f1" stroke="#333" strokeWidth="1" />
    <rect x="10.5" y="13" width="3" height="2" fill="#333" />
  </Svg>
);

const OrangeCamera = ({ size = 25 }) => (
  <Svg size={size}>
    <circle cx="8" cy="7" r="3.5" fill="#e59a52" stroke="#44331f" />
    <circle cx="15" cy="5" r="4.5" fill="#e59a52" stroke="#44331f" />
    <rect x="4" y="10" width="14" height="9" rx="1" fill="#e59a52" stroke="#44331f" />
    <path d="M18 14L23 11V18L18 15Z" fill="#e59a52" stroke="#44331f" />
    <path d="M7 19V23M14 19V23" stroke="#e59a52" strokeWidth="2.4" />
  </Svg>
);

const OrangeMesh = () => (
  <Svg size={25}>
    <path d="M3 2H21L12 23Z" fill="#e59a52" stroke="#3a2a18" strokeWidth="1" />
    <path d="M9 6.5H15L12 14Z" fill="#8fa8b8" stroke="#3a2a18" strokeWidth="1" />
  </Svg>
);

const OrangeBulb = () => (
  <Svg size={25}>
    <path d="M5.5 10A6.5 6.5 0 0 1 18.5 10C18.5 13 15.5 14.5 15.5 17H8.5C8.5 14.5 5.5 13 5.5 10Z" fill="#e59a52" stroke="#3a2a18" />
    <rect x="9" y="17" width="6" height="4.5" fill="#d8d0c4" stroke="#3a2a18" />
    <path d="M9.5 9L12 12L14.5 9" stroke="#3a2a18" />
  </Svg>
);

const TealCamera = () => (
  <Svg size={25}>
    <rect x="1" y="1" width="22" height="22" rx="5" fill="#4e5a58" />
    <circle cx="8" cy="8" r="3" stroke="#27d6ad" strokeWidth="1.5" />
    <circle cx="15.5" cy="6.5" r="3.5" stroke="#27d6ad" strokeWidth="1.5" />
    <rect x="5" y="12" width="11" height="7" stroke="#27d6ad" strokeWidth="1.5" />
    <path d="M16 15L20 13V19L16 17" stroke="#27d6ad" strokeWidth="1.5" />
  </Svg>
);

const TealMesh = ({ size = 25, dark = false }) => (
  <Svg size={size}>
    <path d="M4 4H20L12 21Z" stroke="#2a2a2a" strokeWidth={dark ? 3.2 : 2.8} />
    <path d="M4 4H20L12 21Z" stroke="#27d6ad" strokeWidth="1.3" />
    <rect x="2" y="2" width="4.5" height="4.5" fill="#27d6ad" stroke="#222" />
    <rect x="17.5" y="2" width="4.5" height="4.5" fill="#27d6ad" stroke="#222" />
    <rect x="9.8" y="18" width="4.5" height="4.5" fill="#27d6ad" stroke="#222" />
  </Svg>
);

const TealLight = () => (
  <Svg size={25}>
    <ellipse cx="12" cy="11" rx="9.5" ry="10.5" fill="#596663" />
    <ellipse cx="12" cy="11" rx="8" ry="9" stroke="#27d6ad" strokeWidth="1.5" />
    <circle cx="12" cy="11" r="4" stroke="#27d6ad" strokeWidth="1.5" />
    <path d="M12 15V23" stroke="#27d6ad" strokeWidth="1.5" />
  </Svg>
);

const EyeIcon = () => (
  <Svg size={17}>
    <path d="M2 12C6 4 18 4 22 12C18 20 6 20 2 12Z" stroke="#1e1e1e" strokeWidth="2" />
    <circle cx="12" cy="12" r="3.2" fill="#1e1e1e" />
  </Svg>
);

const ToggleIcon = () => (
  <Svg size={25}>
    <rect x="1.5" y="3" width="21" height="8.5" rx="4" fill="#e8e8e8" />
    <circle cx="6" cy="7.2" r="3" fill="#3d3d3d" />
    <rect x="1.5" y="13.5" width="21" height="8.5" rx="4" stroke="#e8e8e8" strokeWidth="1" />
    <circle cx="18" cy="17.7" r="3.4" fill="#e8e8e8" />
    <path d="M3 17.7H14" stroke="#e8e8e8" strokeWidth="3.5" />
  </Svg>
);

const PinIcon = () => (
  <Svg size={20}>
    <path d="M14 2L22 9L17 11L12.5 15.5L12 19L5.5 12L9.5 11L13 7Z" stroke="#6b6b6b" strokeWidth="1.2" />
    <path d="M8 16L2 22" stroke="#6b6b6b" strokeWidth="1.4" />
  </Svg>
);

const LockIcon = () => (
  <svg width="21" height="16" viewBox="0 0 21 16" fill="none">
    <path d="M2 7V4.5C2 1.2 8 1.2 8.5 4.5V6.5" stroke="#4a4a4a" strokeWidth="1" />
    <rect x="7" y="7" width="12" height="8" stroke="#4a4a4a" strokeWidth="1" fill="#a3a3a3" />
    <rect x="12" y="10" width="2" height="2" fill="#4a4a4a" />
  </svg>
);

const Dots = () => (
  <svg width="15" height="8" viewBox="0 0 15 8">
    {[0, 4, 8, 12].map((x) =>
      [0, 4].map((y) => <rect key={`${x}-${y}`} x={x} y={y} width="2.2" height="2.6" fill="#eee" />)
    )}
  </svg>
);

const TriRight = ({ c = "#5a5a5a" }: { c?: string }) => (
  <svg width="8" height="10" viewBox="0 0 8 10">
    <path d="M0 0L8 5L0 10Z" fill={c} />
  </svg>
);

const TriDown = ({ c = "#5a5a5a" }: { c?: string }) => (
  <svg width="9" height="9" viewBox="0 0 9 9">
    <path d="M0 1H8L4 9Z" fill={c} />
  </svg>
);

const outline = "#2b2b2b";
const tabIcons: React.ReactNode[] = [
  <Svg key="tool" size={25}>
    <path d="M6 2V9M4 10H8V21C8 23 4 23 4 21Z" fill="#eee" stroke={outline} strokeWidth="1.4" />
    <path d="M13 2V6C13 9 15 9.5 15 11V21C15 23 19 23 19 21V11C19 9.5 22 9 22 6V2L19.5 5H15.5Z" fill="#eee" stroke={outline} strokeWidth="1.4" />
  </Svg>,
  <Svg key="render" size={25}>
    <rect x="2" y="6" width="20" height="15" rx="1" fill="#eee" stroke={outline} strokeWidth="1.4" />
    <path d="M8 6V3H16V6" stroke={outline} strokeWidth="1.4" fill="#eee" />
    <path d="M5 12H12M5 15H12M5 18H12" stroke={outline} strokeWidth="1.2" />
    <circle cx="17" cy="12" r="2" fill={outline} />
  </Svg>,
  <Svg key="output" size={25}>
    <rect x="2" y="3" width="20" height="10" rx="1" fill="#eee" stroke={outline} strokeWidth="1.4" />
    <rect x="6" y="9" width="12" height="13" fill="#eee" stroke={outline} strokeWidth="1.4" />
    <path d="M9 18L12 13L15 18Z" fill={outline} />
  </Svg>,
  <Svg key="layer" size={25}>
    <path d="M2 7V23H17M5 4V20H20" stroke={outline} strokeWidth="1.2" />
    <rect x="8" y="1" width="15" height="15" fill="#eee" stroke={outline} strokeWidth="1.4" />
    <path d="M10 14L15 7L18 11L20 9V14Z" fill={outline} />
  </Svg>,
  <Svg key="scene" size={25}>
    <path d="M7 3L2 14C1 19 4 21 8 21C11 21 12 19 11.5 15Z" fill="#eee" stroke={outline} strokeWidth="1.3" />
    <circle cx="17" cy="6" r="3.2" fill="#eee" stroke={outline} strokeWidth="1.2" />
    <circle cx="16" cy="16" r="6" fill="#ccc" stroke={outline} strokeWidth="1.2" />
    <circle cx="16" cy="16" r="2.5" stroke={outline} />
  </Svg>,
  <Svg key="world" size={25}>
    <circle cx="12" cy="12" r="10.5" fill="#e07880" stroke={outline} strokeWidth="1.4" />
    <path d="M8 3C10 7 4 9 3 11C7 13 8 10 11 12C13 14 9 17 11 21C15 21 15 16 18 15C20 13 16 11 17 8C18 7 20 7 20 6C17 3 12 4 8 3Z" fill={outline} />
  </Svg>,
  <Svg key="object" size={25}>
    <path d="M2 7V2H7M17 2H22V7M2 17V22H7M17 22H22V17" stroke={outline} strokeWidth="1.8" />
    <rect x="5.5" y="5.5" width="13" height="13" fill="#f0a050" stroke={outline} strokeWidth="1" />
  </Svg>,
  <Svg key="mod" size={25}>
    <path d="M22 6L18 10L14.5 9L14 5.5L18 2C13 0 9 4 10.5 9L2.5 17C0 20 4 24 7 21.5L15 13.5C20 15 24 11 22 6Z" fill="#70a0e0" stroke={outline} strokeWidth="1.3" />
  </Svg>,
  <Svg key="part" size={25}>
    <path d="M5 5L9 18M5 5L19 11M9 13L19 22" stroke={outline} strokeWidth="3.4" />
    <path d="M5 5L9 18M5 5L19 11M9 13L19 22" stroke="#70a0e0" strokeWidth="1.6" />
    <circle cx="5" cy="5" r="3.2" fill="#70a0e0" stroke={outline} />
    <circle cx="19" cy="10" r="2.6" fill="#70a0e0" stroke={outline} />
    <circle cx="8" cy="20" r="2.6" fill="#70a0e0" stroke={outline} />
    <circle cx="19" cy="21" r="2.6" fill="#70a0e0" stroke={outline} />
  </Svg>,
  <Svg key="phys" size={25}>
    <path d="M19 21C12 24 2 20 2 12C2 6 7 3 11 3" stroke={outline} strokeWidth="3.4" />
    <path d="M19 21C12 24 2 20 2 12C2 6 7 3 11 3" stroke="#70a0e0" strokeWidth="1.6" />
    <circle cx="14" cy="12" r="7" fill="#70a0e0" stroke={outline} strokeWidth="1.3" />
    <circle cx="18" cy="6" r="3" fill="#eee" stroke={outline} />
  </Svg>,
  <Svg key="con" size={25}>
    <path d="M3 14C3 9 14 2 20 2C23 2 23 6 21.5 10C20 16 14 22 8 22C4 22 3 19 3 14Z" fill="#70a0e0" stroke={outline} strokeWidth="1.4" />
    <circle cx="10" cy="14.5" r="4.5" fill="#cfe0f5" stroke={outline} />
    <circle cx="10" cy="14.5" r="1.6" fill={outline} />
    <circle cx="18" cy="6.5" r="1.5" fill="#eee" stroke={outline} />
  </Svg>,
  <TealMesh key="data" size={25} dark />,
  <Svg key="mat" size={25}>
    <circle cx="12" cy="12" r="10.5" fill="#e07880" stroke={outline} strokeWidth="1.4" />
    <path d="M11 2V12L22 12C22 6 17 2 11 2Z" fill="#eebec2" stroke={outline} strokeWidth="1" />
    <path d="M4 18C8 14 10 14 12 13C11 18 8 20 6 20Z" fill={outline} />
  </Svg>,
  <Svg key="tex" size={25}>
    <rect x="2" y="2" width="20" height="20" fill="#e07880" stroke={outline} strokeWidth="1.4" />
    {[
      [4, 4],
      [12, 4],
      [8, 8],
      [16, 8],
      [4, 12],
      [12, 12],
      [8, 16],
      [16, 16],
    ].map(([x, y]) => (
      <rect key={`${x}${y}`} x={x} y={y} width="4" height="4" fill={outline} />
    ))}
  </Svg>,
];

const tabGaps = [0, 5, 12];

const MouseIcon = ({ side }: { side: "left" | "mid" | "right" }) => (
  <svg width="15" height="20" viewBox="0 0 15 20" fill="none">
    <rect x="1" y="1" width="13" height="18" rx="4" stroke="#222" strokeWidth="1" />
    {side === "left" && <path d="M1 9V5C1 2.5 3 1 7 1V9Z" fill="#222" />}
    {side === "right" && <path d="M14 9V5C14 2.5 12 1 8 1V9Z" fill="#222" />}
    {side === "mid" && <rect x="6" y="4" width="3" height="7" rx="1" fill="#222" />}
  </svg>
);

const StopWatch = () => (
  <Svg size={24}>
    <circle cx="12" cy="14" r="8.5" stroke="#222" strokeWidth="1.2" />
    <path d="M12 9V14.5H16M9.5 2.5H14.5M12 2.5V5.5" stroke="#222" strokeWidth="1.2" />
  </Svg>
);

const Transport = ({ kind }: { kind: number }) => (
  <svg width="24" height="22" viewBox="0 0 24 22">
    {kind === 0 && <path d="M5 4H7V18H5ZM19 4V18L8 11Z" fill="#111" />}
    {kind === 1 && <path d="M11.5 5V17L2 11ZM12.5 5L22 11L12.5 17L14.5 11Z" fill="#111" />}
    {kind === 2 && <path d="M19 3V19L5 11Z" fill="#111" />}
    {kind === 3 && <path d="M5 3V19L19 11Z" fill="#111" />}
    {kind === 4 && <path d="M12.5 5V17L22 11ZM11.5 5L2 11L11.5 17L9.5 11Z" fill="#111" />}
    {kind === 5 && <path d="M19 4H17V18H19ZM5 4V18L16 11Z" fill="#111" />}
  </svg>
);

// ground plane homography, fitted on the cube corners and the two axes
const VX = [860, -105];
const VY = [11400, -60];
const ORIGIN = [1066, 688];
const A = -0.048;
const B = 0.0082;

const project = (x: number, y: number): [number, number] => {
  const w = 1 + A * x + B * y;
  return [
    (A * x * VX[0] + B * y * VY[0] + ORIGIN[0]) / w,
    (A * x * VX[1] + B * y * VY[1] + ORIGIN[1]) / w,
  ];
};

const segment = (x0: number, y0: number, x1: number, y1: number) => {
  const p = project(x0, y0);
  const q = project(x1, y1);
  return `M${p[0].toFixed(1)} ${p[1].toFixed(1)}L${q[0].toFixed(1)} ${q[1].toFixed(1)}`;
};

const maxX = (y: number) => (1 + B * y - 0.2) / -A;
const maxY = (x: number) => -(1 + A * x - 0.2) / B;

const buildGrid = (from: number) => {
  let minor = "";
  let major = "";
  for (let y = -70; y <= 90; y++) {
    if (y === 0 && from < 0) continue;
    const d = segment(from, y, maxX(y), y);
    if (y % 10 === 0) major += d;
    else minor += d;
  }
  for (let x = from; x <= 16; x++) {
    if (x === 0) continue;
    const d = segment(x, Math.max(-70, maxY(x)), x, 90);
    if (x % 10 === 0) major += d;
    else minor += d;
  }
  return { minor, major };
};

const backGrid = buildGrid(-70);
const frontGrid = buildGrid(1);

const GridPaths = ({ grid }: { grid: { minor: string; major: string } }) => (
  <>
    <path d={grid.minor} stroke="#000" strokeOpacity="0.06" strokeWidth="1" />
    <path d={grid.major} stroke="#000" strokeOpacity="0.11" strokeWidth="1" />
  </>
);

const GizmoBall = ({ x, y, r, fill, label }: { x: number; y: number; r: number; fill: string; label?: string }) => (
  <>
    <circle cx={x} cy={y} r={r} fill={fill} />
    {label && (
      <text x={x} y={y + 5} textAnchor="middle" fontSize="14" fontFamily="DejaVu Sans, sans-serif" fill="#1c1c1c">
        {label}
      </text>
    )}
  </>
);

const Scene = () => (
  <SceneSvg width="2115" height="1167" viewBox="9 105 2115 1167">
    <GridPaths grid={backGrid} />
    <path d={segment(-70, 0, 14, 0)} stroke="#7e3a40" strokeWidth="1.3" />
    <path d={segment(0, -240, 0, 120)} stroke="#4f6e2a" strokeWidth="1.4" />

    <polygon points="977,586 1136,577 1163,646 988,657" fill="#8b8c8e" />
    <polygon points="988,657 1163,646 1161,795 995,808" fill="#7e807e" />
    <polygon points="977,586 988,657 995,808" fill="#717371" />
    <GridPaths grid={frontGrid} />
    <polygon points="977,586 1136,577 1163,646 1161,795 995,808" fill="none" stroke="#f5a33d" strokeWidth="2.4" strokeLinejoin="round" />
    <path d={segment(1, 0, 14, 0)} stroke="#7e3a40" strokeWidth="1.3" />

    <circle cx="1067" cy="688" r="12.5" fill="none" stroke="#f2f2f2" strokeWidth="1.4" />
    <circle cx="1067" cy="688" r="12.5" fill="none" stroke="#e0303a" strokeWidth="1.4" strokeDasharray="10 10" />
    <path d="M1041 690H1056M1073 687H1093M1066 666V678M1067 698V712" stroke="#111" strokeWidth="1.2" />
    <circle cx="1067" cy="689" r="2.6" fill="#f5a33d" stroke="#222" strokeWidth="0.6" />

    <circle cx="1243" cy="261" r="12.5" fill="none" stroke="#222" strokeWidth="1" />
    <circle cx="1243" cy="261" r="9" fill="none" stroke="#222" strokeWidth="1" strokeDasharray="3 2" />
    <path d="M1243 256L1239 264H1247Z" fill="none" stroke="#222" strokeWidth="1" />

    <path d="M19 596L232 562M19 596L310 593M19 596L292 680M19 596L215 650M232 562L310 593L292 680L215 650Z" stroke="#111" strokeWidth="1" fill="none" />
    <polygon points="280,520 247,558 300,583" fill="#111" />

    <path d="M2058 203L2057 170" stroke="#3a8ce0" strokeWidth="2.6" />
    <path d="M2058 203L2095 201" stroke="#78a020" strokeWidth="2.6" />
    <path d="M2058 203L2062 220" stroke="#f53a54" strokeWidth="2.6" />
    <GizmoBall x={2053} y={184} r={8} fill="#a04b5c" />
    <GizmoBall x={2059} y={242} r={8} fill="#3f70b0" />
    <GizmoBall x={2016} y={207} r={8} fill="#8fd900" />
    <GizmoBall x={2057} y={166} r={10} fill="#2a8cf0" label="Z" />
    <GizmoBall x={2101} y={201} r={10} fill="#78a020" label="Y" />
    <GizmoBall x={2063} y={224} r={10} fill="#f53a54" label="X" />

    <path d="M344 712L361 725L351 731Z" fill="#ff1414" />
    <path d="M354 726L434 870" stroke="#ff1414" strokeWidth="3" />
  </SceneSvg>
);

const frameX = (f: number) => 149 + (f - 10) * 7.87;
const rulerFrames = Array.from({ length: 25 }, (_, i) => (i + 1) * 10);
const lineFrames = Array.from({ length: 56 }, (_, i) => (i - 3) * 5);

const arc = (start: number, end: number, r = 33) => {
  const pt = (d: number) => [37 + r * Math.sin((d * Math.PI) / 180), 37 - r * Math.cos((d * Math.PI) / 180)];
  const [x0, y0] = pt(start);
  const [x1, y1] = pt(end);
  return `M${x0} ${y0}A${r} ${r} 0 0 1 ${x1} ${y1}`;
};

const ringSegments = [
  { from: 0, to: 60, c: "#2cc9b8" },
  { from: 60, to: 110, c: "#42cf90" },
  { from: 110, to: 160, c: "#9ccf50" },
  { from: 160, to: 215, c: "#d8c840" },
  { from: 215, to: 277, c: "#e09a40" },
];

const transformGroups = [
  { label: "位置", vals: ["0 m", "0 m", "0 m"], mb: 6 },
  { label: "旋转", vals: ["0°", "0°", "0°"], mb: 6 },
];

const closedPanels = ["关系", "集合", "实例化", "运动路径", "可见性", "视图显示", "自定义属性"];
const tabNames = ["Layout", "Modeling", "Sculpting", "UV Editing", "Texture Paint", "Shading", "Animation", "Rendering", "Compositing", "Scripting"];
const axes = ["X", "Y", "Z"];

const FieldGroup = ({ label, vals, mb }: { label: string; vals: string[]; mb: number }) => (
  <FieldBlock $mb={mb}>
    {vals.map((v, i) => (
      <FieldRow key={axes[i]}>
        <FieldLabel>{i === 0 ? `${label} X` : axes[i]}</FieldLabel>
        <NumField $first={i === 0} $last={i === 2}>
          {v}
        </NumField>
        <LockSlot>
          <LockIcon />
        </LockSlot>
        <FieldDot />
      </FieldRow>
    ))}
  </FieldBlock>
);

export default function App() {
  return (
    <Page>
      <GlobalStyle />
      <TopEdge />
      <Desk>
        <LeftStrip>
          <StripPiece $h={338} $bg="#1f57c3" />
          <StripPiece $h={88} $bg="#fff">B</StripPiece>
          <StripPiece $h={27} $bg="#5a5a5a" />
          <StripPiece $h={40} $bg="#3a3a3a" />
        </LeftStrip>
        <Window>
          <TitleBar>
            <BlenderLogo size={21} />
            Blender
            <WinButtons>
              <WinButton>
                <svg width="13" height="2">
                  <rect width="13" height="1.4" fill="#111" />
                </svg>
              </WinButton>
              <WinButton>
                <svg width="13" height="18" viewBox="0 0 13 18" fill="none">
                  <rect x="1" y="4" width="9" height="13" stroke="#111" />
                  <path d="M4 4V1H12V14H10" stroke="#111" />
                </svg>
              </WinButton>
              <WinButton>
                <svg width="14" height="20" viewBox="0 0 14 20" fill="none">
                  <path d="M1 1L13 19M13 1L1 19" stroke="#111" strokeWidth="1" />
                </svg>
              </WinButton>
            </WinButtons>
          </TitleBar>

          <TopBar>
            <TopLogo>
              <BlenderLogo size={22} body="#2a2a2a" eye="#2a2a2a" ring="#c8c8c8" />
            </TopLogo>
            <MenuRow>
              <span>文件</span>
              <span>编辑</span>
              <span>渲染</span>
              <span>窗口</span>
              <span>帮助</span>
            </MenuRow>
            <Tabs>
              {tabNames.map((t, i) => (
                <Tab key={t} $active={i === 0}>
                  {t}
                </Tab>
              ))}
              <PlusTab>+</PlusTab>
            </Tabs>
            <SceneArea>
              <SceneGroup>
                <Seg $w={41}>
                  <SceneIcon />
                  <Chevron />
                </Seg>
                <NameSeg $w={155} $tone="field">Scene</NameSeg>
                <Seg $w={27} $tone="white">
                  <LayerCopy />
                </Seg>
                <Seg $w={25} $tone="pale">
                  <CloseGlyph />
                </Seg>
              </SceneGroup>
              <SceneGroup>
                <Seg $w={41}>
                  <LayerIcon />
                  <Chevron />
                </Seg>
                <NameSeg $w={155} $tone="field">View Layer</NameSeg>
                <Seg $w={27} $tone="white">
                  <LayerCopy />
                </Seg>
                <Seg $w={25} $tone="pale">
                  <CloseGlyph />
                </Seg>
              </SceneGroup>
            </SceneArea>
          </TopBar>

          <Workspace>
            <LeftColumn>
              <ViewportArea>
                <HeaderBar>
                  <Group>
                    <Seg $w={41}>
                      <View3DIcon />
                      <Chevron />
                    </Seg>
                  </Group>
                  <ToolIcon>
                    <SelectBoxIcon />
                  </ToolIcon>
                  <Group>
                    {[0, 1, 2, 3, 4].map((k) => (
                      <Seg key={k} $w={25} $tone={k === 0 ? "blue" : "dark"}>
                        <ModeIcon kind={k} />
                      </Seg>
                    ))}
                  </Group>
                  <WidgetRow $ml={658}>
                    <Group>
                      <Seg $w={104}>
                        <OrientIcon />
                        <span>全局</span>
                        <span style={{ width: 22 }} />
                        <Chevron />
                      </Seg>
                    </Group>
                    <Group>
                      <Seg $w={41}>
                        <PivotIcon />
                        <Chevron />
                      </Seg>
                    </Group>
                    <Group>
                      <Seg $w={25} $tone="white">
                        <MagnetIcon />
                      </Seg>
                      <Seg $w={42}>
                        <SnapGridIcon />
                        <Chevron />
                      </Seg>
                    </Group>
                    <Group>
                      <Seg $w={25} $tone="white">
                        <PropCircleIcon />
                      </Seg>
                      <Seg $w={42} $tone="mid">
                        <FalloffIcon />
                        <Chevron c="#999" />
                      </Seg>
                    </Group>
                  </WidgetRow>
                  <RightRow>
                    <Group>
                      <Seg $w={60}>
                        <span>选项</span>
                        <Chevron />
                      </Seg>
                    </Group>
                  </RightRow>
                </HeaderBar>

                <Canvas>
                  <Scene />
                  <ViewHeader>
                    <Group>
                      <ModeSeg $w={143}>
                        <ObjectModeIcon />
                        <ModeLabel>物体模式</ModeLabel>
                        <Chevron />
                      </ModeSeg>
                    </Group>
                    <MenuButtons>
                      <MenuButton>视图</MenuButton>
                      <MenuButton>选择</MenuButton>
                      <MenuButton>添加</MenuButton>
                      <MenuButton>物体</MenuButton>
                    </MenuButtons>
                    <RightRow>
                      <Group>
                        <Seg $w={41}>
                          <OptionSelIcon />
                          <Chevron />
                        </Seg>
                      </Group>
                      <Group>
                        <Seg $w={25} $tone="blue">
                          <GizmoIcon />
                        </Seg>
                        <Seg $w={27}>
                          <Chevron />
                        </Seg>
                      </Group>
                      <Group>
                        <Seg $w={25} $tone="blue">
                          <OverlayIcon />
                        </Seg>
                        <Seg $w={27}>
                          <Chevron />
                        </Seg>
                      </Group>
                      <Group>
                        <Seg $w={26} $tone="white">
                          <XrayIcon />
                        </Seg>
                      </Group>
                      <Group>
                        {[0, 1, 2, 3].map((k) => (
                          <Seg key={k} $w={25} $tone={k === 1 ? "blue" : "dark"}>
                            <ShadeIcon kind={k} />
                          </Seg>
                        ))}
                        <Seg $w={27}>
                          <Chevron />
                        </Seg>
                      </Group>
                    </RightRow>
                  </ViewHeader>

                  <ViewInfo>
                    <div>用户透视</div>
                    <ViewInfoLatin>(1) Collection | Cube</ViewInfoLatin>
                  </ViewInfo>

                  <Toolbar>
                    <ToolGroup>
                      <ToolButton $active $corner>
                        <SelectBoxIcon size={37} />
                      </ToolButton>
                      <ToolButton>
                        <CursorTool />
                      </ToolButton>
                    </ToolGroup>
                    <ToolGroup>
                      <ToolButton>
                        <MoveTool />
                      </ToolButton>
                      <ToolButton>
                        <RotateTool />
                      </ToolButton>
                      <ToolButton $corner>
                        <ScaleTool />
                      </ToolButton>
                      <ToolButton>
                        <TransformTool />
                      </ToolButton>
                    </ToolGroup>
                    <ToolGroup>
                      <ToolButton $corner>
                        <AnnotateTool />
                      </ToolButton>
                      <ToolButton>
                        <MeasureTool />
                      </ToolButton>
                    </ToolGroup>
                    <ToolGroup>
                      <ToolButton $corner>
                        <AddCubeTool />
                      </ToolButton>
                    </ToolGroup>
                  </Toolbar>

                  <Tooltip>
                    <TipLine>添加立方体</TipLine>
                    <TipLine $mt={7}>交互式向网格添加立方体</TipLine>
                    <TipLine $tight>• 左 Ctrl 切换拖动时吸附。</TipLine>
                    <TipLine $tight>• 左 Alt 切换从中心拖动。</TipLine>
                    <TipLine $tight>• 左 Shift 切换固定宽高比.</TipLine>
                    <TipLine $mt={7} $tone="#c4c4c4" $tight>快捷键: Shift 空格, 9</TipLine>
                    <PythonLine $mt={8} $tone="#808080">Python: bpy.ops.wm.tool_set_by_id(name="builtin.primitive_cube_add")</PythonLine>
                    <RedBox />
                    <RedNote $x={220} $y={18}>使用提示</RedNote>
                  </Tooltip>

                  <RedNote $x={456} $y={737}>Python代码</RedNote>

                  <SideChevron $side="right" $y={53}>
                    <svg width="7" height="12" viewBox="0 0 7 12" fill="none">
                      <path d="M5.5 1L1.5 6L5.5 11" stroke="#bbb" strokeWidth="1.5" />
                    </svg>
                  </SideChevron>

                  <NavColumn>
                    <NavButton>
                      <Svg size={26}>
                        <circle cx="14.5" cy="9.5" r="7" fill="#303030" />
                        <path d="M14.5 6V13M11 9.5H18" stroke="#9a9a9a" strokeWidth="1.7" />
                        <path d="M9.5 15L3.5 21" stroke="#303030" strokeWidth="2.2" />
                      </Svg>
                    </NavButton>
                    <NavButton>
                      <Svg size={26}>
                        <path d="M7 21C4 18 3 15 1.5 13C1 11.5 3 11 4.5 12.5L6.5 14.5L5.5 6C5.3 4.5 7.5 4.2 8 6L9.5 11.5L10 4C10 2.5 12 2.5 12.3 4L13 11.5L15 5C15.5 3.5 17.5 4 17.2 5.5L16 12.5L18.5 8.5C19.5 7.5 21 8.5 20.3 10C19 13 18.5 16 17 19C15.5 22.5 10 23.5 7 21Z" fill="#303030" />
                      </Svg>
                    </NavButton>
                    <NavButton>
                      <Svg size={26}>
                        <circle cx="7" cy="7.5" r="3.6" fill="#303030" />
                        <circle cx="15" cy="6" r="4.6" fill="#303030" />
                        <circle cx="15" cy="6" r="1.5" fill="#8a8a8a" />
                        <rect x="5" y="12" width="12" height="8" fill="#303030" />
                        <path d="M17.5 16L22 13V20Z" fill="#303030" />
                      </Svg>
                    </NavButton>
                    <NavButton>
                      <Svg size={26}>
                        <path d="M5.5 4H18.5L22 21H2ZM3.8 12.5H20.2M4.8 8H19.2M2.8 16.5H21.2M9.5 4L8.5 21M14.5 4L15.5 21" stroke="#303030" strokeWidth="1.1" />
                      </Svg>
                    </NavButton>
                  </NavColumn>
                </Canvas>
              </ViewportArea>

              <Timeline>
                <TimeHeader>
                  <Group>
                    <Seg $w={41}>
                      <Svg size={24}>
                        <circle cx="12" cy="12" r="9.5" fill="#f1f1f1" />
                        <path d="M13 3.5L9 12L13 20.5" stroke="#3d3d3d" strokeWidth="2.2" />
                      </Svg>
                      <Chevron />
                    </Seg>
                  </Group>
                  <WidgetRow $ml={6} $gap={0}>
                    <Group>
                      <DropSeg $w={62} $pad={10}>
                        <span>回放</span>
                        <Chevron />
                      </DropSeg>
                      <DropSeg $w={96} $pad={8}>
                        <span>抠像(插帧)</span>
                        <Chevron />
                      </DropSeg>
                    </Group>
                  </WidgetRow>
                  <PlainMenu>
                    <span>视图</span>
                    <span>标记</span>
                  </PlainMenu>
                  <WidgetRow $ml={637} $gap={7}>
                    <Group>
                      <Seg $w={24} $tone="white">
                        <svg width="12" height="16" viewBox="0 0 12 16">
                          <ellipse cx="6" cy="8" rx="4.5" ry="6.5" fill="#111" />
                        </svg>
                      </Seg>
                      <Seg $w={27} $tone="mid">
                        <Chevron c="#999" />
                      </Seg>
                    </Group>
                    <Group>
                      {[0, 1, 2, 3, 4, 5].map((k) => (
                        <LightSeg key={k} $w={k === 2 || k === 3 ? 26 : 25.5}>
                          <Transport kind={k} />
                        </LightSeg>
                      ))}
                    </Group>
                  </WidgetRow>
                  <RightRow $gap={7}>
                    <Group>
                      <LightSeg $w={95}>1</LightSeg>
                    </Group>
                    <Group>
                      <LightSeg $w={27}>
                        <StopWatch />
                      </LightSeg>
                      <RangeSeg $w={110}>
                        <span>起始</span>
                        <span>1</span>
                      </RangeSeg>
                      <RangeSeg $w={124}>
                        <span>结束点</span>
                        <span>250</span>
                      </RangeSeg>
                    </Group>
                  </RightRow>
                </TimeHeader>
                <Ruler>
                  {rulerFrames.map((f) => (
                    <RulerNum key={f} style={{ left: frameX(f) }}>
                      {f}
                    </RulerNum>
                  ))}
                  <CurrentFrame>1</CurrentFrame>
                </Ruler>
                <Tracks>
                  {lineFrames.map((f) => (
                    <GridLine key={f} $major={f % 10 === 0} style={{ left: frameX(f) }} />
                  ))}
                  <OutOfRange />
                  <PlayHead />
                  <ScrollBar />
                </Tracks>
                <SideChevron $side="left" $y={52}>
                  <svg width="7" height="12" viewBox="0 0 7 12" fill="none">
                    <path d="M1.5 1L5.5 6L1.5 11" stroke="#999" strokeWidth="1.3" />
                  </svg>
                </SideChevron>
                <SideChevron $side="right" $y={52}>
                  <svg width="7" height="12" viewBox="0 0 7 12" fill="none">
                    <path d="M5.5 1L1.5 6L5.5 11" stroke="#999" strokeWidth="1.3" />
                  </svg>
                </SideChevron>
              </Timeline>
            </LeftColumn>

            <RightColumn>
              <Outliner>
                <SmallHeader>
                  <WidgetRow>
                    <Group>
                      <Seg $w={41}>
                        <TreeIcon />
                        <Chevron />
                      </Seg>
                    </Group>
                    <Group>
                      <Seg $w={41}>
                        <LayerIcon />
                        <Chevron />
                      </Seg>
                    </Group>
                  </WidgetRow>
                  <SearchBox $ml={34}>
                    <MagnifyIcon />
                  </SearchBox>
                  <RightRow>
                    <Group>
                      <Seg $w={41}>
                        <FunnelIcon />
                        <Chevron />
                      </Seg>
                    </Group>
                    <Group>
                      <Seg $w={33} $tone="white">
                        <NewCollectionIcon />
                      </Seg>
                    </Group>
                  </RightRow>
                </SmallHeader>
                <OutlinerList>
                  <OutRow $tone={1} $pad={27}>
                    <RowIcon $w={24}>
                      <CollectionBox />
                    </RowIcon>
                    <RowLabel $w={120}>场景集合</RowLabel>
                  </OutRow>
                  <OutRow $tone={0} $pad={35}>
                    <Disclosure $w={18}>
                      <TriDown c="#111" />
                    </Disclosure>
                    <RowIcon $w={25} $on>
                      <CollectionBox />
                    </RowIcon>
                    <RowLabel $w={90}>Collection</RowLabel>
                    <RowEnd>
                      <CheckBox>
                        <svg width="11" height="11" viewBox="0 0 11 11" fill="none">
                          <path d="M2 6L4.5 8.5L9 2.5" stroke="#eee" strokeWidth="1.6" />
                        </svg>
                      </CheckBox>
                      <EyeIcon />
                    </RowEnd>
                  </OutRow>
                  <OutRow $tone={1} $pad={61}>
                    <Disclosure $w={18}>
                      <TriRight c="#111" />
                    </Disclosure>
                    <RowIcon $w={25}>
                      <OrangeCamera />
                    </RowIcon>
                    <RowLabel $w={80}>Camera</RowLabel>
                    <TealCamera />
                    <RowEnd>
                      <EyeIcon />
                    </RowEnd>
                  </OutRow>
                  <OutRow $tone={0} $pad={61} $selected>
                    <Disclosure $w={18}>
                      <TriRight c="#111" />
                    </Disclosure>
                    <RowIcon $w={25} $on>
                      <OrangeMesh />
                    </RowIcon>
                    <RowLabel $w={67}>Cube</RowLabel>
                    <TealMesh />
                    <RowEnd>
                      <EyeIcon />
                    </RowEnd>
                  </OutRow>
                  <OutRow $tone={1} $pad={61}>
                    <Disclosure $w={18}>
                      <TriRight c="#111" />
                    </Disclosure>
                    <RowIcon $w={25}>
                      <OrangeBulb />
                    </RowIcon>
                    <RowLabel $w={66}>Light</RowLabel>
                    <TealLight />
                    <RowEnd>
                      <EyeIcon />
                    </RowEnd>
                  </OutRow>
                  {Array.from({ length: 10 }, (_, i) => (
                    <OutRow key={i} $tone={i} $pad={0} />
                  ))}
                </OutlinerList>
              </Outliner>

              <Properties>
                <PropHeader>
                  <Group>
                    <Seg $w={41}>
                      <ToggleIcon />
                      <Chevron />
                    </Seg>
                  </Group>
                  <SearchBox $ml={97}>
                    <MagnifyIcon />
                  </SearchBox>
                  <RightRow>
                    <Group>
                      <Seg $w={26}>
                        <Chevron />
                      </Seg>
                    </Group>
                  </RightRow>
                </PropHeader>
                <PropBody>
                  <TabColumn>
                    {tabIcons.map((ic, i) => (
                      <PropTab key={i} $active={i === 6} $gap={tabGaps.includes(i)}>
                        {ic}
                      </PropTab>
                    ))}
                  </TabColumn>
                  <PropContent>
                    <TitleRow>
                      <ObjectModeIcon c="#111" />
                      <span>Cube</span>
                      <PinSlot>
                        <PinIcon />
                      </PinSlot>
                    </TitleRow>
                    <NameField>
                      <Seg $w={40} $tone="mid">
                        <ObjectModeIcon />
                        <Chevron />
                      </Seg>
                      <NameSeg $w={345} $tone="field">Cube</NameSeg>
                    </NameField>
                    <PanelHead>
                      <TriDown />
                      <span>变换</span>
                      <PanelDots>
                        <Dots />
                      </PanelDots>
                    </PanelHead>
                    <PanelBody>
                      {transformGroups.map((g) => (
                        <FieldGroup key={g.label} {...g} />
                      ))}
                      <FieldBlock $mb={7}>
                        <FieldRow>
                          <FieldLabel>模式</FieldLabel>
                          <SelectField>
                            <span>XYZ 欧拉</span>
                            <Chevron />
                          </SelectField>
                          <span />
                          <FieldDot />
                        </FieldRow>
                      </FieldBlock>
                      <FieldGroup label="缩放" vals={["1.000", "1.000", "1.000"]} mb={10} />
                      <PanelHead $pad={29}>
                        <TriRight />
                        <span>变换增量</span>
                      </PanelHead>
                    </PanelBody>
                    {closedPanels.map((t) => (
                      <PanelHead key={t} $h={31}>
                        <TriRight />
                        <span>{t}</span>
                        <PanelDots>
                          <Dots />
                        </PanelDots>
                      </PanelHead>
                    ))}
                  </PropContent>
                </PropBody>
                <StatWidget>
                  <StatPill>
                    <StatLine>
                      <svg width="10" height="10" viewBox="0 0 10 10">
                        <path d="M5 0L10 5H6.5V10H3.5V5H0Z" fill="#2e9fe6" />
                      </svg>
                      <StatValue>
                        0<StatUnit>K/s</StatUnit>
                      </StatValue>
                    </StatLine>
                    <StatLine>
                      <svg width="10" height="10" viewBox="0 0 10 10">
                        <path d="M5 10L10 5H6.5V0H3.5V5H0Z" fill="#23b023" />
                      </svg>
                      <StatValue>
                        0<StatUnit>K/s</StatUnit>
                      </StatValue>
                    </StatLine>
                  </StatPill>
                  <StatDial>
                    <StatRing width="74" height="74" viewBox="0 0 74 74" fill="none">
                      {ringSegments.map((s) => (
                        <path key={s.from} d={arc(s.from, s.to)} stroke={s.c} strokeWidth="2" />
                      ))}
                    </StatRing>
                    <StatNumber>77</StatNumber>
                    <StatPercent>%</StatPercent>
                  </StatDial>
                </StatWidget>
              </Properties>
            </RightColumn>
          </Workspace>

          <StatusBar>
            <Hint $w={314}>
              <MouseIcon side="left" />
              <span>选择</span>
            </Hint>
            <Hint $w={313}>
              <MouseIcon side="mid" />
            </Hint>
            <Hint $w={300}>
              <MouseIcon side="right" />
            </Hint>
            <Version>2.92.0</Version>
          </StatusBar>
          <Taskbar>
            <TaskItem />
            <Clock>20:44</Clock>
          </Taskbar>
        </Window>
      </Desk>
    </Page>
  );
}

function LayerCopy() {
  return (
    <svg width="18" height="22" viewBox="0 0 18 22" fill="none">
      <path d="M5 6V2H12L16 6V16H12" stroke="#222" strokeWidth="1.1" />
      <rect x="2" y="7" width="10" height="13" stroke="#222" strokeWidth="1.1" />
    </svg>
  );
}

function CloseGlyph() {
  return (
    <svg width="12" height="16" viewBox="0 0 12 16" fill="none">
      <path d="M1.5 2L10.5 14M10.5 2L1.5 14" stroke="#999" strokeWidth="1.1" />
    </svg>
  );
}
